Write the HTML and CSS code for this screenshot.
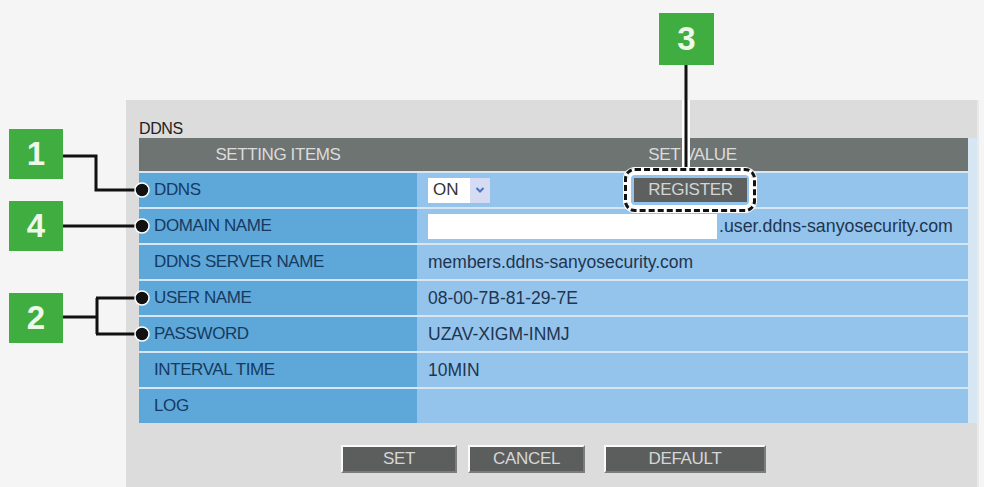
FILE: index.html
```html
<!DOCTYPE html>
<html>
<head>
<meta charset="utf-8">
<link rel="stylesheet" href="styles.css">
</head>
<body>
<div class="screen">
  <div class="panel">
    <div class="title">DDNS</div>
    <div class="table">
      <div class="hcell">SETTING ITEMS</div>
      <div class="hcell">SET VALUE</div>

      <div class="lcell">DDNS</div>
      <div class="rcell">
        <div class="select"><span class="sel-text">ON</span><span class="sel-arrow"><svg width="10" height="8" viewBox="0 0 10 8"><path d="M1.5 2 L5 5.5 L8.5 2" fill="none" stroke="#4f72c4" stroke-width="2"/></svg></span></div>
        <button class="reg">REGISTER</button>
      </div>

      <div class="lcell">DOMAIN NAME</div>
      <div class="rcell"><div class="input"></div><span class="suffix">.user.ddns-sanyosecurity.com</span></div>

      <div class="lcell">DDNS SERVER NAME</div>
      <div class="rcell">members.ddns-sanyosecurity.com</div>

      <div class="lcell">USER NAME</div>
      <div class="rcell">08-00-7B-81-29-7E</div>

      <div class="lcell">PASSWORD</div>
      <div class="rcell">UZAV-XIGM-INMJ</div>

      <div class="lcell">INTERVAL TIME</div>
      <div class="rcell">10MIN</div>

      <div class="lcell">LOG</div>
      <div class="rcell"></div>
    </div>
    <div class="actions">
      <button class="act act-set">SET</button>
      <button class="act act-cancel">CANCEL</button>
      <button class="act act-default">DEFAULT</button>
    </div>
  </div>

  <svg class="wires" width="984" height="487" viewBox="0 0 984 487">
    <g fill="none" stroke-linejoin="miter">
      <path d="M686 100 V171" stroke="#ffffff" stroke-width="8"/>
      <path d="M686 64 V171" stroke="#111" stroke-width="3"/>
      <path d="M62 156 H96 V190 H142" stroke="#111" stroke-width="3"/>
      <path d="M62 226 H142" stroke="#111" stroke-width="3"/>
      <path d="M62 317 H97 M97 298 V334 M96 298 H142 M96 334 H142" stroke="#111" stroke-width="3"/>
    </g>
    <g fill="#111" stroke="#fff" stroke-width="1.5">
      <circle cx="142" cy="190" r="7"/>
      <circle cx="142" cy="226" r="7"/>
      <circle cx="142" cy="298" r="7"/>
      <circle cx="142" cy="334" r="7"/>
    </g>
  </svg>

  <div class="callout"></div>

  <div class="tag tag-1">1</div>
  <div class="tag tag-4">4</div>
  <div class="tag tag-2">2</div>
  <div class="tag tag-3">3</div>
</div>
</body>
</html>
```

FILE: styles.css
```css
* { box-sizing: border-box; }
html, body { margin: 0; padding: 0; }
body {
  background: #f5f5f5;
  font-family: "Liberation Sans", Arial, sans-serif;
}
.screen {
  position: relative;
  width: 984px;
  height: 487px;
  overflow: hidden;
  padding: 100px 0 0 126px;
  background: #f5f5f5;
}
.panel {
  width: 853px;
  height: 400px;
  background: #dcdcdc;
  border-right: 2px solid #e9e9e9;
  padding: 0 0 0 13px;
}
.title {
  height: 38px;
  display: flex;
  align-items: flex-end;
  padding-bottom: 1px;
  font-size: 16px;
  line-height: 1;
  color: #222;
  letter-spacing: -0.4px;
}
.table {
  display: grid;
  grid-template-columns: 278px 551px;
  grid-template-rows: 33px repeat(7, 34px);
  row-gap: 2px;
  background: #d6e6f2;
  font-size: 17px;
  letter-spacing: -0.4px;
}
.hcell {
  background: #6e7472;
  color: #dcdcdc;
  display: flex;
  align-items: center;
  justify-content: center;
  padding-top: 1px;
}
.lcell {
  background: #5ea7d9;
  color: #163a60;
  display: flex;
  align-items: center;
  padding-left: 15px;
}
.rcell {
  background: #94c4eb;
  color: #1f3550;
  display: flex;
  align-items: center;
  padding-left: 11px;
  font-size: 17.5px;
  letter-spacing: 0;
}
.select {
  width: 62px;
  height: 25px;
  background: #fff;
  display: flex;
  align-items: center;
}
.sel-text {
  flex: 1;
  padding-left: 5px;
  color: #333;
  font-size: 17px;
}
.sel-arrow {
  width: 20px;
  height: 25px;
  background: #d4dbf3;
  display: flex;
  align-items: center;
  justify-content: center;
}
.reg {
  margin-left: 144px;
  width: 113px;
  height: 24px;
  border: none;
  background: #5d605f;
  color: #d4d4d4;
  font-family: "Liberation Sans", Arial, sans-serif;
  font-size: 17px;
  letter-spacing: -0.3px;
  padding: 0;
}
.input {
  width: 289px;
  height: 25px;
  background: #fff;
}
.suffix {
  margin-left: 2px;
  font-size: 17.8px;
}
.actions {
  margin-top: 22px;
  width: 829px;
  display: flex;
  justify-content: center;
}
.act {
  height: 28px;
  border: 2px solid;
  border-color: #fafafa #7c7c7c #7c7c7c #fafafa;
  background: #5b5e5d;
  color: #d6d6d6;
  font-family: "Liberation Sans", Arial, sans-serif;
  font-size: 17px;
  letter-spacing: -0.3px;
  padding: 0;
}
.act-set { width: 116px; }
.act-cancel { width: 117px; margin-left: 11px; }
.act-default { width: 162px; margin-left: 19px; }

.wires {
  position: absolute;
  left: 0;
  top: 0;
  pointer-events: none;
}
.callout {
  position: absolute;
  left: 624px;
  top: 168px;
  width: 132px;
  height: 44px;
  border: 4px solid #fff;
  border-radius: 11px;
  box-shadow: inset 0 0 0 3px #fff, 0 0 0 1px #fff;
}
.callout::after {
  content: "";
  position: absolute;
  inset: -4px;
  border: 3px dashed #111;
  border-radius: 11px;
}
.tag {
  position: absolute;
  width: 54px;
  height: 50px;
  background: #3fad3f;
  color: #eef8e8;
  font-weight: bold;
  font-size: 33px;
  display: flex;
  align-items: center;
  justify-content: center;
}
.tag-1 { left: 9px; top: 129px; }
.tag-4 { left: 9px; top: 201px; }
.tag-2 { left: 9px; top: 293px; }
.tag-3 { left: 659px; top: 13px; width: 55px; height: 52px; }
```
